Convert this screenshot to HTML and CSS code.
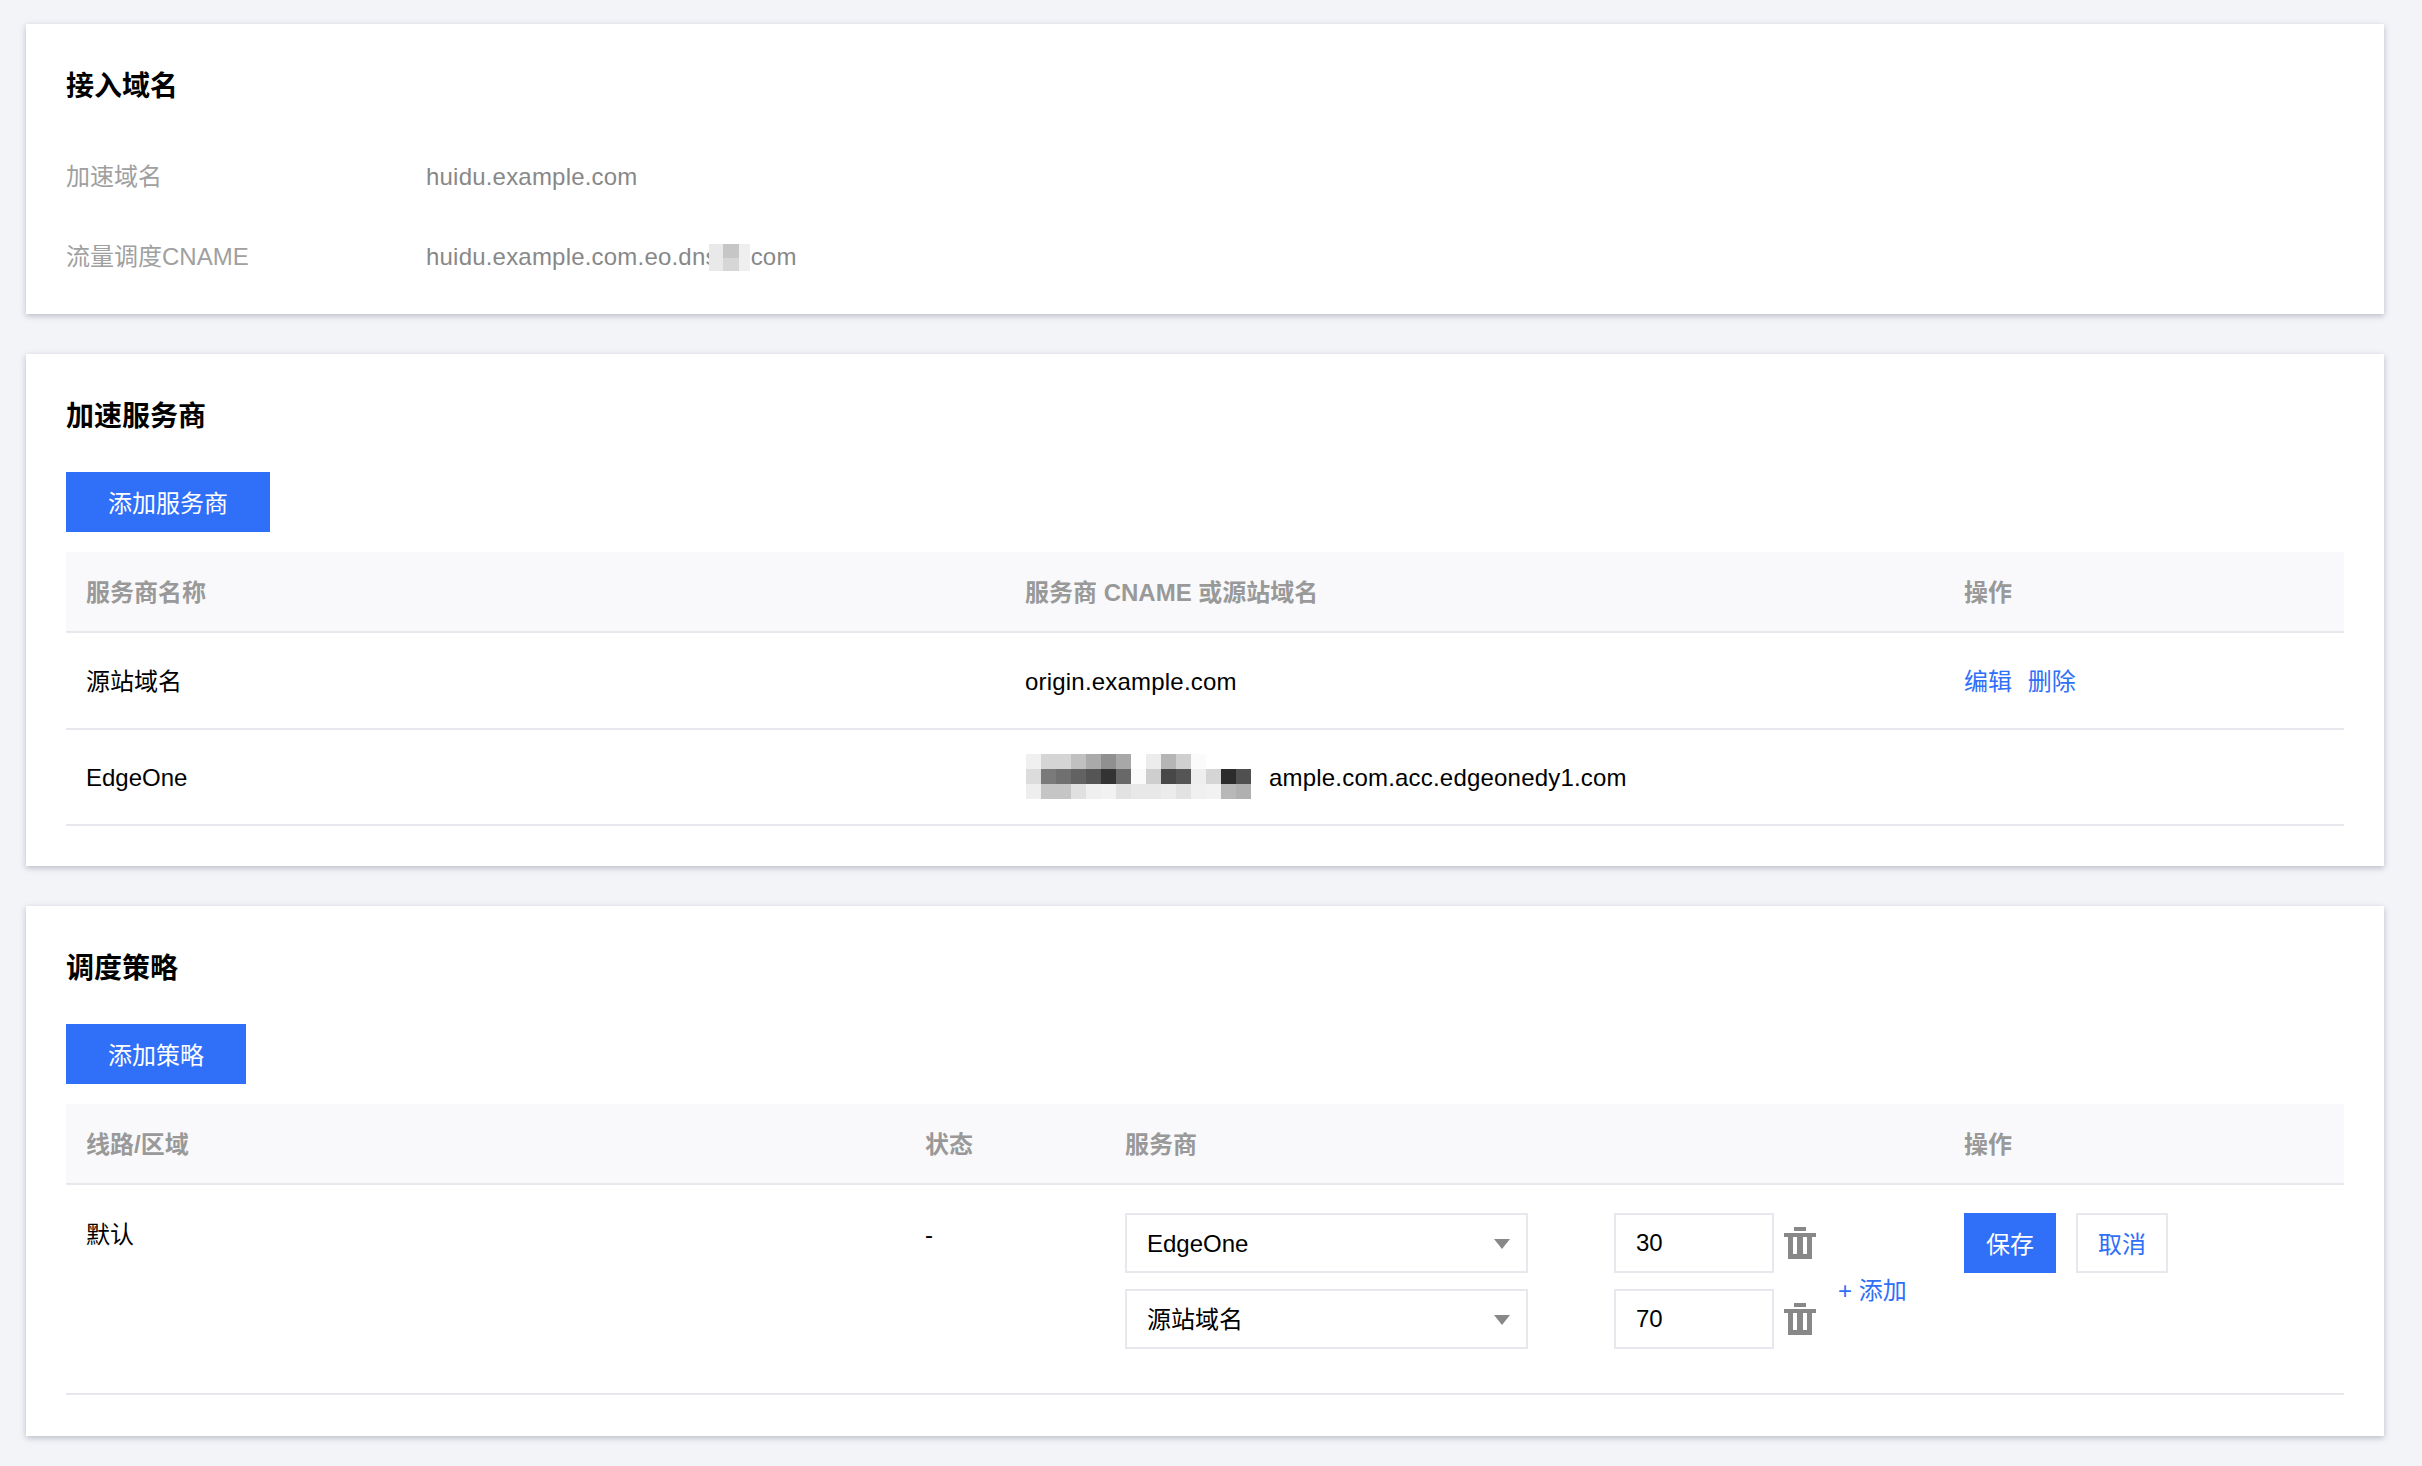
FILE: index.html
```html
<!DOCTYPE html>
<html lang="en">
  <head>
    <meta charset="UTF-8" />
    <meta name="viewport" content="width=device-width, initial-scale=1.0" />
    <title>流量调度</title>
    <link rel="stylesheet" href="styles.css">
  </head>
  <body>
    <!-- Domain info -->
    <section class="card card-domain">
      <h2>接入域名</h2>
      <div class="info-row">
        <div class="info-label">加速域名</div>
        <div class="info-value">huidu.example.com</div>
      </div>
      <div class="info-row">
        <div class="info-label">流量调度CNAME</div>
        <div class="info-value">
          <span>huidu.example.com.eo.dns</span>
          <svg class="mosaic-small" width="41" height="27" viewBox="0 0 41 27">
            <rect x="0" y="0" width="14" height="27" fill="#e9e9e9" />
            <rect x="14" y="0" width="16" height="14" fill="#c6c6c6" />
            <rect x="14" y="14" width="16" height="13" fill="#d6d6d6" />
            <rect x="30" y="0" width="11" height="27" fill="#efefef" />
          </svg>
          <span>com</span>
        </div>
      </div>
    </section>

    <!-- Providers -->
    <section class="card card-provider">
      <h2>加速服务商</h2>
      <button class="btn btn-primary btn-add">添加服务商</button>
      <table class="table table-provider">
        <colgroup>
          <col class="col-939" />
          <col class="col-939" />
          <col />
        </colgroup>
        <thead>
          <tr>
            <th>服务商名称</th>
            <th>服务商 CNAME 或源站域名</th>
            <th>操作</th>
          </tr>
        </thead>
        <tbody>
          <tr>
            <td>源站域名</td>
            <td class="domain">origin.example.com</td>
            <td>
              <a class="link" href="#">编辑</a>
              <a class="link" href="#">删除</a>
            </td>
          </tr>
          <tr>
            <td>EdgeOne</td>
            <td class="domain">
              <div class="masked">
                <svg class="mosaic" id="mosaic" width="225" height="45" viewBox="0 0 225 45"></svg>
                <span>ample.com.acc.edgeonedy1.com</span>
              </div>
            </td>
            <td></td>
          </tr>
        </tbody>
      </table>
    </section>

    <!-- Policy -->
    <section class="card card-policy">
      <h2>调度策略</h2>
      <button class="btn btn-primary btn-add">添加策略</button>
      <table class="table table-policy">
        <colgroup>
          <col class="col-839" />
          <col class="col-200" />
          <col class="col-839" />
          <col />
        </colgroup>
        <thead>
          <tr>
            <th>线路/区域</th>
            <th>状态</th>
            <th>服务商</th>
            <th>操作</th>
          </tr>
        </thead>
        <tbody>
          <tr>
            <td><div class="cell-text">默认</div></td>
            <td><div class="cell-text">-</div></td>
            <td>
              <div class="weights">
                <div class="weight-rows">
                  <div class="weight-row">
                    <div class="select-wrap">
                      <select class="field select">
                        <option>EdgeOne</option>
                      </select>
                    </div>
                    <input class="field input" type="text" value="30" />
                    <svg class="trash" width="32" height="32" viewBox="0 0 32 32"><use href="#trash-icon" /></svg>
                  </div>
                  <div class="weight-row">
                    <div class="select-wrap">
                      <select class="field select">
                        <option>源站域名</option>
                      </select>
                    </div>
                    <input class="field input" type="text" value="70" />
                    <svg class="trash" width="32" height="32" viewBox="0 0 32 32"><use href="#trash-icon" /></svg>
                  </div>
                </div>
                <a class="link add-link" href="#">+ 添加</a>
              </div>
            </td>
            <td>
              <div class="actions">
                <button class="btn btn-primary btn-save">保存</button>
                <button class="btn btn-default">取消</button>
              </div>
            </td>
          </tr>
        </tbody>
      </table>
    </section>

    <svg class="defs" width="0" height="0">
      <defs>
        <g id="trash-icon" fill="#888888">
          <rect x="10" y="0" width="12" height="4" />
          <rect x="0" y="6" width="32" height="4" />
          <path d="M4 10h24v22H4z M9 10v17h4V10z M19 10v17h4V10z" fill-rule="evenodd" />
        </g>
      </defs>
    </svg>

    <script>
      // Pixel blocks for the blurred part of the EdgeOne CNAME
      const shades = [
        ["f0", "d5", "d5", "c0", "aa", "90", "a8", "ff", "ec", "b5", "cf", "fb", "ff", "ff", "ff"],
        ["dc", "7a", "70", "62", "55", "33", "68", "fa", "ce", "48", "55", "ee", "d5", "2c", "50"],
        ["ee", "c5", "c5", "e0", "ef", "f2", "e2", "e8", "e8", "ec", "e2", "f0", "f2", "b8", "b0"],
      ];
      const mosaic = document.getElementById("mosaic");
      shades.forEach(function (row, y) {
        row.forEach(function (shade, x) {
          const rect = document.createElementNS("http://www.w3.org/2000/svg", "rect");
          rect.setAttribute("x", x * 15);
          rect.setAttribute("y", y * 15);
          rect.setAttribute("width", 15);
          rect.setAttribute("height", 15);
          rect.setAttribute("fill", "#" + shade + shade + shade);
          mosaic.appendChild(rect);
        });
      });
    </script>
  </body>
</html>
```

FILE: styles.css
```css
* {
  box-sizing: border-box;
}

body {
  margin: 0;
  padding: 24px 38px 30px 26px;
  background: #f3f4f8;
  font-family: "Liberation Sans", "Noto Sans CJK SC", sans-serif;
  font-size: 24px;
  line-height: 36px;
  color: #000;
}

.card {
  background: #fff;
  padding: 0 40px;
  margin-bottom: 40px;
  box-shadow: 0 2px 6px rgba(54, 58, 80, 0.3);
}

.card:last-of-type {
  margin-bottom: 0;
}

.card-domain {
  height: 290px;
}

.card-provider {
  height: 512px;
}

.card-policy {
  height: 530px;
}

h2 {
  margin: 0;
  padding-top: 42px;
  font-size: 28px;
  line-height: 42px;
  font-weight: 700;
}

.info-row {
  display: flex;
  margin-bottom: 44px;
}

.card-domain h2 {
  margin-bottom: 51px;
}

.info-label {
  width: 360px;
  color: #a0a0a0;
}

.info-value {
  display: flex;
  align-items: center;
  color: #888;
  letter-spacing: 0.2px;
}

.mosaic-small {
  margin-left: -9px;
  margin-right: 1px;
  flex: none;
}

.btn {
  display: block;
  height: 60px;
  border: 0;
  padding: 0 0 2px;
  font-family: inherit;
  font-size: 24px;
  cursor: pointer;
}

.btn-primary {
  background: #306ff8;
  color: #fff;
}

.btn-default {
  width: 92px;
  background: #fff;
  border: 2px solid #e7e7ee;
  color: #306ff8;
}

.btn-add {
  margin-top: 34px;
  padding: 0 42px 2px;
}

.btn-save {
  width: 92px;
}

.table {
  width: 100%;
  margin-top: 20px;
  border-collapse: collapse;
  table-layout: fixed;
}

.col-939 {
  width: 939px;
}

.col-839 {
  width: 839px;
}

.col-200 {
  width: 200px;
}

.table th {
  height: 80px;
  padding: 3px 20px 0;
  background: #f9f9fb;
  border-bottom: 2px solid #e7e7ee;
  color: #999;
  font-weight: 700;
  text-align: left;
}

.table td {
  height: 96px;
  padding: 2px 20px 0;
  border-bottom: 2px solid #e7e7ee;
}

.table-provider tbody tr:first-child td {
  height: 97px;
}

.table td.domain {
  letter-spacing: 0.2px;
}

.table-policy td {
  height: 210px;
  padding-top: 28px;
  vertical-align: top;
}

.cell-text {
  padding-top: 4px;
}

.link {
  margin-right: 9px;
  color: #306ff8;
  text-decoration: none;
}

.masked {
  display: flex;
  align-items: center;
}

.mosaic {
  margin-left: 1px;
  margin-right: 18px;
  margin-bottom: 4px;
  flex: none;
}

.weights {
  display: flex;
  align-items: center;
}

.weight-rows {
  display: flex;
  flex-direction: column;
  gap: 16px;
}

.weight-row {
  display: flex;
  align-items: center;
}

.select-wrap {
  position: relative;
  width: 403px;
  margin-right: 86px;
}

/* Arrow sits on top of the native select */
.select-wrap::after {
  content: "";
  position: absolute;
  right: 18px;
  top: 26px;
  border-left: 8px solid transparent;
  border-right: 8px solid transparent;
  border-top: 10px solid #888;
}

.field {
  display: block;
  height: 60px;
  background: #fff;
  border: 2px solid #e7e7ee;
  border-radius: 0;
  padding: 0 20px;
  font-family: inherit;
  font-size: 24px;
  color: #000;
  outline: none;
}

.select {
  width: 100%;
  appearance: none;
}

.input {
  width: 160px;
  margin-right: 10px;
}

.trash {
  flex: none;
}

.add-link {
  margin: 20px 0 0 22px;
}

.actions {
  display: flex;
  gap: 20px;
}

.defs {
  position: absolute;
}
```
